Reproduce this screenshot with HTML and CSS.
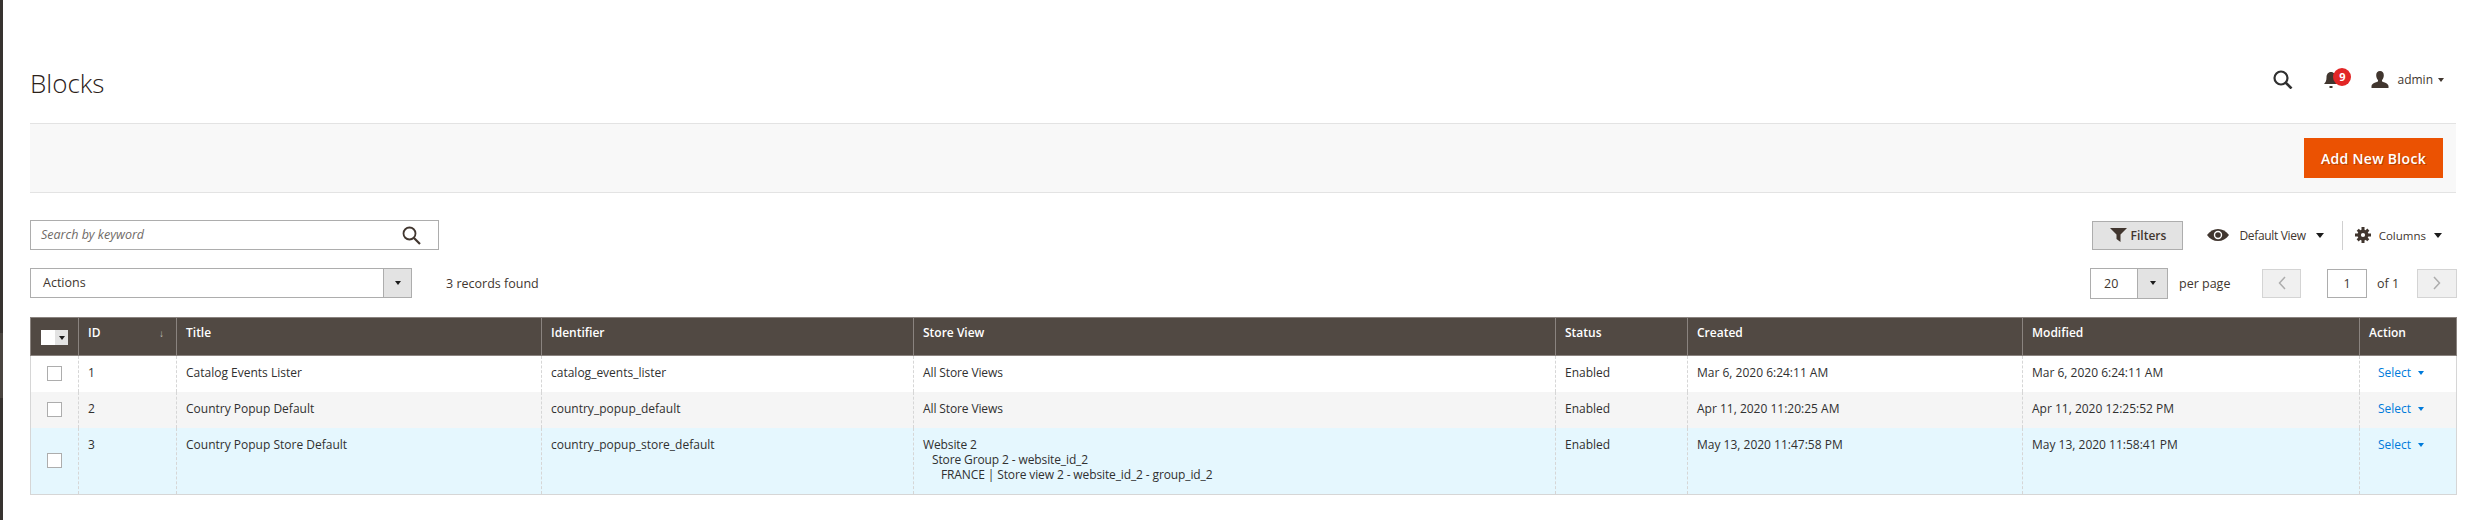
FILE: index.html
```html
<!DOCTYPE html>
<html lang="en">
<head>
  <meta charset="UTF-8">
  <title>Blocks</title>
  <link rel="stylesheet" href="styles.css">
</head>
<body>
  <div class="menu-edge">
    <div class="edge-top"></div>
    <div class="edge-current"></div>
    <div class="edge-bottom"></div>
  </div>
  <div class="page">
    <header class="page-header">
      <h1>Blocks</h1>
      <div class="header-tools">
        <svg class="tool-search" width="20" height="19" viewBox="0 0 20 19"><circle cx="8" cy="8" r="6.500" fill="none" stroke="#303030" stroke-width="2.200"/><path d="M12.500 12.500l6 6" stroke="#303030" stroke-width="2.600"/></svg>
        <div class="bell">
          <svg width="16" height="18" viewBox="0 0 16 18"><path d="M8 1c3 0 4.500 2.400 4.500 5.500 0 3.500 1 5 2.500 6.500H1c1.500-1.500 2.500-3 2.500-6.500C3.500 3.400 5 1 8 1z" fill="#41362f"/><path d="M6.500 15h3v2h-3z" fill="#41362f"/></svg>
          <span class="badge">9</span>
        </div>
        <div class="user">
          <svg width="18" height="17" viewBox="0 0 18 17"><path d="M9 0c2.500 0 3.800 1.800 3.800 4.200 0 2-.8 3.800-1.800 4.800v1.500c2 1 6 1.500 6.500 4.500V17H.5v-2c.5-3 4.500-3.500 6.500-4.500V9C6 8 5.200 6.200 5.200 4.200 5.200 1.800 6.500 0 9 0z" fill="#41362f"/></svg>
          <span class="user-name">admin</span>
          <span class="caret small"></span>
        </div>
      </div>
    </header>

    <div class="action-bar">
      <button class="primary">Add New Block</button>
    </div>

    <div class="grid-controls">
      <div class="search">
        <span class="search-text">Search by keyword</span>
        <svg width="19" height="19" viewBox="0 0 19 19"><circle cx="7.500" cy="7.500" r="6" fill="none" stroke="#41362f" stroke-width="1.800"/><path d="M12 12l6 6" stroke="#41362f" stroke-width="2.200"/></svg>
      </div>
      <div class="top-right">
        <button class="filters">
          <svg width="17" height="14" viewBox="0 0 17 14"><path d="M0 0h17l-6.500 6.500V14l-4-3V6.500z" fill="#41362f"/></svg>
          Filters
        </button>
        <div class="view">
          <svg width="22" height="12" viewBox="0 0 22 12"><path d="M0 6c3-4 6.500-6 11-6s8 2 11 6c-3 4-6.500 6-11 6S3 10 0 6z" fill="#41362f"/><circle cx="11" cy="6" r="4.200" fill="#fff"/><circle cx="11" cy="6" r="2.800" fill="#41362f"/></svg>
          <span>Default View</span>
          <span class="caret"></span>
        </div>
        <div class="columns">
          <svg width="16" height="16" viewBox="0 0 16 16"><circle cx="8" cy="8" r="3.800" fill="none" stroke="#41362f" stroke-width="3.400"/><path d="M6.500 0h3v3h-3zM6.500 13h3v3h-3zM0 6.500h3v3H0zM13 6.500h3v3h-3zM1.700 3.800l2.100-2.100 2 2-2.100 2.100zM10.200 12.300l2.100-2.100 2 2-2.100 2.100zM10.200 3.700l2.100-2.100 2.100 2.100-2.100 2.100zM1.600 12.300l2.100-2.100 2.100 2.100-2.100 2.100z" fill="#41362f"/></svg>
          <span>Columns</span>
          <span class="caret"></span>
        </div>
      </div>
    </div>

    <div class="grid-controls second">
      <div class="left-group">
        <div class="select actions"><span class="select-value">Actions</span><span class="select-btn"><span class="caret"></span></span></div>
        <span class="records">3 records found</span>
      </div>
      <div class="pager">
        <div class="select per-page"><span class="select-value">20</span><span class="select-btn"><span class="caret"></span></span></div>
        <span class="per-page-label">per page</span>
        <span class="page-btn prev"><svg width="8" height="14" viewBox="0 0 8 14"><path d="M7 1L1.500 7 7 13" fill="none" stroke="#adadad" stroke-width="1.500"/></svg></span>
        <span class="page-input">1</span>
        <span class="page-of">of 1</span>
        <span class="page-btn next"><svg width="8" height="14" viewBox="0 0 8 14"><path d="M1 1l5.500 6L1 13" fill="none" stroke="#adadad" stroke-width="1.500"/></svg></span>
      </div>
    </div>

    <table class="grid">
      <colgroup>
        <col class="c-check"><col class="c-id"><col class="c-title"><col class="c-ident"><col class="c-store"><col class="c-status"><col class="c-created"><col class="c-modified"><col class="c-action">
      </colgroup>
      <thead>
        <tr>
          <th class="check-head"><span class="mass"><span class="mass-box"></span><span class="mass-btn"><span class="caret tiny"></span></span></span></th>
          <th><span class="id-head">ID<span class="sort">↓</span></span></th>
          <th>Title</th>
          <th>Identifier</th>
          <th>Store View</th>
          <th>Status</th>
          <th>Created</th>
          <th>Modified</th>
          <th>Action</th>
        </tr>
      </thead>
      <tbody>
        <tr>
          <td class="check"><span class="box"></span></td>
          <td>1</td>
          <td>Catalog Events Lister</td>
          <td>catalog_events_lister</td>
          <td class="store">All Store Views</td>
          <td>Enabled</td>
          <td>Mar 6, 2020 6:24:11 AM</td>
          <td>Mar 6, 2020 6:24:11 AM</td>
          <td class="act"><a>Select</a><span class="caret blue"></span></td>
        </tr>
        <tr class="even">
          <td class="check"><span class="box"></span></td>
          <td>2</td>
          <td>Country Popup Default</td>
          <td>country_popup_default</td>
          <td class="store">All Store Views</td>
          <td>Enabled</td>
          <td>Apr 11, 2020 11:20:25 AM</td>
          <td>Apr 11, 2020 12:25:52 PM</td>
          <td class="act"><a>Select</a><span class="caret blue"></span></td>
        </tr>
        <tr class="active">
          <td class="check"><span class="box"></span></td>
          <td>3</td>
          <td>Country Popup Store Default</td>
          <td>country_popup_store_default</td>
          <td class="store">
            <div>Website 2</div>
            <div class="indent-1">Store Group 2 - website_id_2</div>
            <div class="indent-2">FRANCE | Store view 2 - website_id_2 - group_id_2</div>
          </td>
          <td>Enabled</td>
          <td>May 13, 2020 11:47:58 PM</td>
          <td>May 13, 2020 11:58:41 PM</td>
          <td class="act"><a>Select</a><span class="caret blue"></span></td>
        </tr>
      </tbody>
    </table>
  </div>
</body>
</html>
```

FILE: styles.css
```css
* {
  box-sizing: border-box;
  margin: 0;
  padding: 0;
}

body {
  display: flex;
  background: #fff;
  color: #41362f;
  font-family: 'Open Sans', 'Liberation Sans', sans-serif;
  font-size: 12px;
  height: 520px;
  overflow: hidden;
}

.menu-edge {
  display: flex;
  flex-direction: column;
  flex: none;
  width: 3px;
  background: #373330;
}

.edge-top {
  height: 333px;
}

.edge-current {
  height: 65px;
  background: #4a4540;
}

.page {
  width: 2453px;
  padding-left: 27px;
}

.page-header {
  display: flex;
  justify-content: space-between;
  align-items: flex-start;
  height: 123px;
  padding-top: 64px;
}

.page-header h1 {
  color: #2b2119;
  font-size: 26px;
  font-weight: 300;
  line-height: 38px;
}

.header-tools {
  display: flex;
  align-items: center;
  height: 19px;
  margin-top: 6px;
  padding-right: 12px;
}

.tool-search {
  margin-right: 30px;
}

.bell {
  position: relative;
  display: flex;
  width: 16px;
  margin-right: 32px;
}

.badge {
  position: absolute;
  left: 10px;
  top: -3px;
  width: 18px;
  height: 18px;
  border-radius: 50%;
  background: #e22626;
  color: #fff;
  font-size: 11px;
  font-weight: 700;
  line-height: 18px;
  text-align: center;
}

.user {
  display: flex;
  align-items: center;
  gap: 8px;
}

.user-name {
  margin-right: -3px;
  font-size: 12px;
}

.caret {
  display: inline-block;
  width: 0;
  height: 0;
  border-left: 4px solid transparent;
  border-right: 4px solid transparent;
  border-top: 5px solid #1c1c1c;
}

.caret.small {
  border-left-width: 3.500px;
  border-right-width: 3.500px;
  border-top-width: 4px;
  border-top-color: #41362f;
}

.action-bar {
  display: flex;
  justify-content: flex-end;
  align-items: center;
  height: 70px;
  padding-right: 13px;
  background: #f8f8f8;
  border-top: 1px solid #e3e3e3;
  border-bottom: 1px solid #e3e3e3;
}

.primary {
  width: 139px;
  height: 40px;
  border: none;
  background: #eb5202;
  color: #fff;
  font-family: inherit;
  font-size: 14px;
  font-weight: 600;
  letter-spacing: .3px;
  text-shadow: 1px 1px 0 rgba(0, 0, 0, .25);
}

.grid-controls {
  display: flex;
  justify-content: space-between;
  align-items: center;
  height: 30px;
  margin-top: 27px;
}

.grid-controls.second {
  margin-top: 18px;
}

.search {
  display: flex;
  align-items: center;
  justify-content: space-between;
  width: 409px;
  height: 30px;
  padding: 0 17px 0 10px;
  border: 1px solid #adadad;
}

.search-text {
  margin-top: -2px;
  color: #6f6a66;
  font-size: 12.500px;
  font-style: italic;
}

.top-right {
  display: flex;
  align-items: center;
  padding-right: 14px;
}

.filters {
  display: flex;
  align-items: center;
  justify-content: center;
  gap: 4px;
  width: 91px;
  height: 29px;
  margin-right: 24px;
  background: #e3e3e3;
  border: 1px solid #adadad;
  color: #41362f;
  font-family: inherit;
  font-size: 12px;
  font-weight: 600;
}

.view {
  display: flex;
  align-items: center;
  gap: 10px;
  height: 29px;
  padding-right: 18px;
  border-right: 1px solid #d0d0d0;
  font-size: 12px;
  letter-spacing: -.33px;
}

.columns {
  display: flex;
  align-items: center;
  gap: 8px;
  padding-left: 12px;
  font-size: 11.500px;
}

.left-group {
  display: flex;
  align-items: center;
  gap: 34px;
}

.select {
  display: flex;
  height: 30px;
  border: 1px solid #adadad;
}

.select.actions {
  width: 382px;
  font-size: 12.500px;
}

.select-value {
  flex: 1;
  line-height: 28px;
  padding-left: 12px;
}

.select-btn {
  display: flex;
  align-items: center;
  justify-content: center;
  width: 28px;
  background: #e3e3e3;
  border-left: 1px solid #adadad;
}

.select-btn .caret {
  border-left-width: 3.500px;
  border-right-width: 3.500px;
  border-top-width: 4px;
}

.records {
  font-size: 12.500px;
}

.pager {
  display: flex;
  align-items: center;
  font-size: 12.500px;
}

.select.per-page {
  width: 78px;
  height: 31px;
}

.per-page .select-value {
  padding-left: 13px;
  line-height: 29px;
}

.per-page .select-btn {
  flex: none;
  width: 30px;
}

.per-page-label {
  width: 51px;
  margin-left: 11px;
  margin-right: 32px;
  white-space: nowrap;
}

.page-btn {
  display: flex;
  align-items: center;
  justify-content: center;
  width: 39px;
  height: 29px;
  background: #f0f0f0;
  border: 1px solid #d4d4d4;
}

.page-btn.next {
  width: 40px;
  margin-right: -1px;
}

.page-input {
  width: 40px;
  height: 29px;
  margin-left: 26px;
  border: 1px solid #adadad;
  line-height: 27px;
  text-align: center;
}

.page-of {
  width: 21px;
  margin-left: 10px;
  margin-right: 19px;
  white-space: nowrap;
}

.grid {
  width: 2426px;
  margin-top: 19px;
  border-collapse: collapse;
  table-layout: fixed;
}

.c-check { width: 48px; }
.c-id { width: 98px; }
.c-title { width: 365px; }
.c-ident { width: 372px; }
.c-store { width: 642px; }
.c-status { width: 132px; }
.c-created { width: 335px; }
.c-modified { width: 337px; }
.c-action { width: 97px; }

.grid th {
  height: 38px;
  padding: 7px 9px 0;
  background: #514943;
  border: 1px solid #8a837f;
  color: #fff;
  font-size: 12px;
  font-weight: 600;
  line-height: 16px;
  text-align: left;
  vertical-align: top;
}

.grid th.check-head {
  padding: 12px 0 0 10px;
}

.mass {
  display: flex;
  width: 27px;
  height: 15px;
  background: #e3e3e3;
}

.mass-box {
  width: 14px;
  background: #fff;
}

.mass-btn {
  display: flex;
  flex: 1;
  align-items: center;
  justify-content: center;
}

.caret.tiny {
  border-left-width: 3px;
  border-right-width: 3px;
  border-top-width: 4px;
}

.id-head {
  display: flex;
  justify-content: space-between;
  padding-right: 3px;
}

.sort {
  color: #c4c0bd;
  font-size: 10px;
  font-weight: 400;
}

.grid td {
  height: 36px;
  padding: 9px 9px 0;
  border-left: 1px dashed #d6d6d6;
  border-right: 1px dashed #d6d6d6;
  color: #303030;
  font-size: 12px;
  line-height: 15px;
  vertical-align: top;
}

.grid td:first-child {
  border-left: 1px solid #d6d6d6;
}

.grid td:last-child {
  border-right: 1px solid #d6d6d6;
}

.grid td.store {
  letter-spacing: -.12px;
}

.grid tr.even td {
  background: #f5f5f5;
}

.grid tr.active td {
  height: 67px;
  background: #e5f7fe;
  border-bottom: 1px solid #d6d6d6;
}

.grid td.check {
  padding: 0;
  vertical-align: middle;
}

.box {
  display: block;
  width: 15px;
  height: 15px;
  margin: 0 auto;
  background: #fff;
  border: 1px solid #adadad;
}

.indent-1 {
  padding-left: 9px;
}

.indent-2 {
  padding-left: 18px;
}

.grid td.act {
  padding-left: 18px;
  color: #007bdb;
}

.act a {
  margin-right: 7px;
}

.caret.blue {
  border-left-width: 3.500px;
  border-right-width: 3.500px;
  border-top-width: 4px;
  border-top-color: #007bdb;
  vertical-align: 2px;
}
```
